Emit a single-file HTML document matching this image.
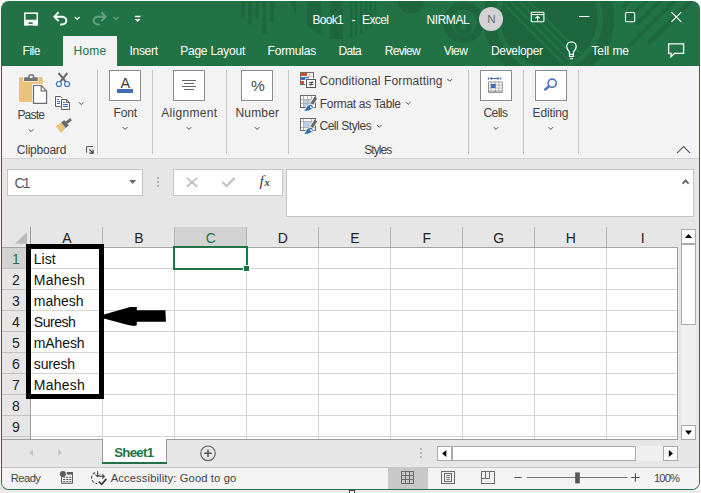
<!DOCTYPE html>
<html lang="en"><head><meta charset="utf-8"><title>Book1 - Excel</title>
<style>
html,body{margin:0;padding:0;}
body{width:701px;height:493px;position:relative;overflow:hidden;background:#fff;font-family:"Liberation Sans",sans-serif;}
.b{position:absolute;box-sizing:border-box;}
.t{position:absolute;white-space:pre;line-height:1;}
svg{position:absolute;overflow:visible;}
#win{position:absolute;left:1px;top:1px;width:699px;height:489px;border-radius:8px;overflow:hidden;background:#217346;}
#in{position:absolute;left:-1px;top:-1px;width:701px;height:493px;}
</style></head><body>
<div class="b" style="left:0;top:490px;width:701px;height:3px;background:#ebebeb"></div>
<div class="b" style="left:0;top:0;width:1px;height:480px;background:#f8f3f4"></div>
<div class="b" style="left:0;top:480px;width:11px;height:10px;background:linear-gradient(#f1eeee,#dedede)"></div>
<div class="b" style="left:349px;top:490px;width:6px;height:5px;background:#fff;border:1px solid #3a3a3a"></div>
<div id="win"><div id="in">
<svg class="b" style="left:0;top:0" width="701" height="66" viewBox="0 0 701 66">
<defs><clipPath id="cpd"><circle cx="549" cy="18" r="47.5"/></clipPath></defs>
<g fill="rgba(0,0,0,0.105)">
<rect x="241.1" y="0" width="3.7" height="17.6"/><rect x="248.2" y="0" width="3.7" height="24.5"/>
<rect x="255.4" y="0" width="3.7" height="18.5"/><rect x="262.5" y="0" width="3.7" height="33.4"/><rect x="269.9" y="0" width="3.7" height="21.3"/>
<polygon points="289,0 296,0 296,15"/>
<polygon points="307,0 321,0 321,34.5 307,26"/><rect x="330.2" y="0" width="12.6" height="39"/>
<rect x="350.2" y="0" width="2.1" height="38.5"/><rect x="355" y="0" width="2.1" height="35.7"/><rect x="360" y="0" width="2.2" height="33.5"/><rect x="365" y="0" width="2.1" height="30.7"/><rect x="370" y="0" width="2" height="27.8"/><rect x="374.6" y="0" width="1.6" height="24.3"/>
<path d="M397,0 A13.7,13.7 0 0 0 424.4,0 Z"/>
<circle cx="549" cy="18" r="48.6"/>
</g>
<g clip-path="url(#cpd)" stroke="#217346" stroke-width="2.6" fill="none">
<path d="M500,0 L580,80 M509,0 L589,80 M518,0 L598,80 M527,0 L607,80"/>
</g>
<g fill="none" stroke="rgba(0,0,0,0.105)">
<circle cx="463.5" cy="22.5" r="16.7" stroke-width="7.8"/>
<circle cx="463.5" cy="26.5" r="5.9" stroke-width="5.2"/>
<circle cx="549" cy="18" r="59.6" stroke-width="11.5"/>
<g stroke-width="3.9">
<path d="M631.6,-1 L622.6,8"/><path d="M648,-1 L626,21"/><path d="M662,-1 L636.5,24.5"/>
<path d="M676,-1 L628.5,46.5"/><path d="M693,-1 L648.5,43.5"/>
</g>
</g></svg>
<svg class="b" style="left:0;top:0" width="701" height="66" viewBox="0 0 701 66" fill="none" stroke="#fff" stroke-width="1.3">
<rect x="24.85" y="13.15" width="12.4" height="11.5" stroke-width="1.5"/>
<path d="M24.5,19.8 H37.6 V25.4 H32.7 V22.2 H28.5 V25.4 H24.5 Z" fill="#fff" stroke="none"/>
<!-- undo -->
<path d="M58.6,12.2 L54.4,16.7 L58.6,21.2" stroke-width="1.9"/>
<path d="M54.8,16.7 H62 A4.4,3.9 0 0 1 62,24.5 H60.2" stroke-width="1.9"/>
<path d="M74.8,17 L77.2,19.4 L79.6,17" stroke-width="1.2"/>
<!-- redo (dim) -->
<g opacity="0.33">
<path d="M101.4,12.2 L105.6,16.7 L101.4,21.2" stroke-width="1.9"/>
<path d="M105.2,16.7 H98 A4.4,3.9 0 0 0 98,24.5 H99.8" stroke-width="1.9"/>
<path d="M113.6,17 L116,19.4 L118.4,17" stroke-width="1.2"/>
</g>
<!-- customize -->
<path d="M134.9,16.5 H140.4" stroke-width="1.5"/>
<path d="M134.7,18.9 H140.6 L137.65,22 Z" fill="#fff" stroke="none"/>
<!-- ribbon display options -->
<rect x="531.3" y="12.3" width="12.6" height="9.4" rx="0.8" stroke-width="1.1"/>
<path d="M531.3,14.6 H543.9" stroke-width="1"/>
<path d="M537.6,21 V16.4 M535.4,18.4 L537.6,16.2 L539.8,18.4" stroke-width="1.1"/>
<!-- minimize -->
<path d="M579,16.5 H589.3" stroke-width="1.1"/>
<!-- maximize -->
<rect x="625.5" y="12.5" width="9.2" height="9.2" rx="1.2" stroke-width="1.1"/>
<!-- close -->
<path d="M671.4,12.1 L681.2,21.9 M681.2,12.1 L671.4,21.9" stroke-width="1.1"/>
<!-- light bulb -->
<path d="M569.5,54.4 V53 C569.5,50.8 566.7,49.8 566.7,46.6 A4.75,4.75 0 0 1 576.2,46.6 C576.2,49.8 573.4,50.8 573.4,53 V54.4" stroke-width="1.3"/>
<rect x="569.5" y="54.5" width="3.9" height="2" stroke-width="1.1"/>
<path d="M570,58.6 H573" stroke-width="1.1"/>
<!-- comment -->
<path d="M668.6,43.9 H683.6 V53.4 H674.6 L671,56.8 V53.4 H668.6 Z" stroke-width="1.3"/>
</svg>
<span class="t" style="left:312.40px;top:14.00px;font-size:12px;letter-spacing:-0.655px;color:#fff;">Book1</span>
<span class="t" style="left:351.60px;top:14.00px;font-size:12px;letter-spacing:0.000px;color:#fff;">-</span>
<span class="t" style="left:362.00px;top:14.00px;font-size:12px;letter-spacing:-0.585px;color:#fff;">Excel</span>
<span class="t" style="left:426.60px;top:14.00px;font-size:12px;letter-spacing:-0.467px;color:#fff;">NIRMAL</span>
<div class="b" style="left:479px;top:7px;width:24px;height:24px;border-radius:12px;background:#d3d3d3"></div>
<span class="t" style="left:487.30px;top:14.00px;font-size:11.5px;letter-spacing:0.000px;color:#6d6a7f;">N</span>
<div class="b" style="left:63px;top:36px;width:54px;height:31px;background:#f3f3f3;"></div>
<span class="t" style="left:22.60px;top:45.00px;font-size:12px;letter-spacing:-0.511px;color:#fff;">File</span>
<span class="t" style="left:73.60px;top:45.00px;font-size:12px;letter-spacing:0.195px;color:#217346;">Home</span>
<span class="t" style="left:129.50px;top:45.00px;font-size:12px;letter-spacing:-0.302px;color:#fff;">Insert</span>
<span class="t" style="left:180.20px;top:45.00px;font-size:12px;letter-spacing:-0.229px;color:#fff;">Page Layout</span>
<span class="t" style="left:267.50px;top:45.00px;font-size:12px;letter-spacing:-0.188px;color:#fff;">Formulas</span>
<span class="t" style="left:338.60px;top:45.00px;font-size:12px;letter-spacing:-0.719px;color:#fff;">Data</span>
<span class="t" style="left:384.80px;top:45.00px;font-size:12px;letter-spacing:-0.677px;color:#fff;">Review</span>
<span class="t" style="left:443.70px;top:45.00px;font-size:12px;letter-spacing:-0.508px;color:#fff;">View</span>
<span class="t" style="left:491.00px;top:45.00px;font-size:12px;letter-spacing:-0.337px;color:#fff;">Developer</span>
<span class="t" style="left:591.40px;top:45.00px;font-size:12px;letter-spacing:-0.069px;color:#fff;">Tell me</span>
<div class="b" style="left:2px;top:66px;width:697px;height:423px;border-radius:0 0 7px 7px;overflow:hidden;background:#e6e6e6"><div class="b" style="left:-2px;top:-66px;width:701px;height:493px">
<div class="b" style="left:2px;top:66px;width:697px;height:92px;background:#f3f3f3;"></div>
<div class="b" style="left:2px;top:158px;width:697px;height:1px;background:#d3d3d3;"></div>
<div class="b" style="left:97px;top:70px;width:1px;height:84px;background:#c4c4c4;"></div>
<div class="b" style="left:152px;top:70px;width:1px;height:84px;background:#c4c4c4;"></div>
<div class="b" style="left:226px;top:70px;width:1px;height:84px;background:#c4c4c4;"></div>
<div class="b" style="left:288px;top:70px;width:1px;height:84px;background:#c4c4c4;"></div>
<div class="b" style="left:468px;top:70px;width:1px;height:84px;background:#c4c4c4;"></div>
<div class="b" style="left:523px;top:70px;width:1px;height:84px;background:#c4c4c4;"></div>
<div class="b" style="left:578px;top:70px;width:1px;height:84px;background:#c4c4c4;"></div>
<svg class="b" style="left:0;top:0" width="701" height="170" viewBox="0 0 701 170">
<!-- paste: clipboard -->
<rect x="19" y="77" width="23.9" height="25" rx="1.7" fill="#eac27b"/>
<path d="M24,80.9 V78.4 Q24,77.2 25.2,77.2 H28.3 V75.7 Q28.3,74.2 29.8,74.2 H32.7 Q34.2,74.2 34.2,75.7 V77.2 H36.6 Q37.8,77.2 37.8,78.4 V80.9 Z" fill="#f3f3f3" stroke="#f3f3f3" stroke-width="1.8"/>
<path d="M24,80.9 V78.4 Q24,77.2 25.2,77.2 H28.3 V75.7 Q28.3,74.2 29.8,74.2 H32.7 Q34.2,74.2 34.2,75.7 V77.2 H36.6 Q37.8,77.2 37.8,78.4 V80.9 Z" fill="#737373"/>
<rect x="29.9" y="75.8" width="2.7" height="2.3" fill="#fff"/>
<path d="M33.5,85.5 H41.2 L46.6,90.9 V103.4 H33.5 Z" fill="#fff" stroke="#f6f6f6" stroke-width="3"/>
<path d="M33.5,85.5 H41.2 L46.6,90.9 V103.4 H33.5 Z" fill="#fff" stroke="#6a6a6a" stroke-width="1.2" stroke-linejoin="miter"/>
<path d="M41.2,85.7 V90.9 H46.4" fill="none" stroke="#6a6a6a" stroke-width="1.2"/>
<!-- scissors -->
<g fill="none">
<path d="M58.6,73 L65.6,81.6" stroke="#6a6a6a" stroke-width="2"/>
<path d="M67.4,73 L60.4,81.6" stroke="#6a6a6a" stroke-width="2"/>
<circle cx="58.9" cy="84" r="2.5" stroke="#4472b8" stroke-width="1.2"/>
<circle cx="67.1" cy="84" r="2.5" stroke="#4472b8" stroke-width="1.2"/>
</g>
<!-- copy -->
<path d="M55.5,96.5 H60.5 L62.5,98.5 V106.5 H55.5 Z" fill="#fff" stroke="#fff" stroke-width="1.9"/>
<path d="M55.5,96.5 H60.5 L62.5,98.5 V106.5 H55.5 Z" fill="#fff" stroke="#5a5a5a" stroke-width="1"/>
<path d="M57,99.5 H59 M57,101.5 H60.2 M57,103.5 H60.2" stroke="#3e6db5" stroke-width="1.1" fill="none"/>
<path d="M61.5,99.5 H66.5 L69.5,102.5 V109.5 H61.5 Z" fill="#fff" stroke="#fff" stroke-width="1.9"/>
<path d="M61.5,99.5 H66.5 L69.5,102.5 V109.5 H61.5 Z" fill="#fff" stroke="#5a5a5a" stroke-width="1"/>
<path d="M66.5,99.5 V102.5 H69.5" fill="none" stroke="#5a5a5a" stroke-width="1"/>
<path d="M63,102.5 H65.2 M63,104.5 H68 M63,106.5 H68" stroke="#3e6db5" stroke-width="1.1" fill="none"/>
<!-- format painter -->
<g transform="translate(58.4,129.4) rotate(-39.3)">
<polygon points="0,-4.5 6.6,-3.5 6.6,3.5 0,4.5" fill="#eac27b"/>
<rect x="6.5" y="-3.6" width="4" height="7.2" fill="#6b6b6b"/>
<rect x="10.4" y="-1.4" width="5.9" height="2.8" fill="#6b6b6b"/>
</g>
<!-- dialog launcher -->
<path d="M86.6,152.7 V146.6 H93" fill="none" stroke="#4f4f4f" stroke-width="1"/>
<path d="M89.4,149.4 L93,153" fill="none" stroke="#333" stroke-width="1.1"/>
<path d="M93.1,149.5 V153.1 H89.5" fill="none" stroke="#333" stroke-width="1.1"/>
</svg>
<span class="t" style="left:17.40px;top:109.00px;font-size:12px;letter-spacing:-0.771px;color:#424242;">Paste</span>
<svg class="b" style="left:0;top:0" width="701" height="493"><path d="M28.70,129.35 L31.00,131.65 L33.30,129.35" fill="none" stroke="#4a4a4a" stroke-width="1.0"/></svg>
<svg class="b" style="left:0;top:0" width="701" height="493"><path d="M78.90,102.25 L81.20,104.55 L83.50,102.25" fill="none" stroke="#4a4a4a" stroke-width="1.0"/></svg>
<span class="t" style="left:16.80px;top:144.00px;font-size:12px;letter-spacing:-0.232px;color:#424242;">Clipboard</span>
<div class="b" style="left:109px;top:70px;width:32px;height:31px;background:#fff;border:1px solid #8c8c8c"></div>
<span class="t" style="left:113.50px;top:107.00px;font-size:12px;letter-spacing:-0.171px;color:#424242;">Font</span>
<svg class="b" style="left:0;top:0" width="701" height="493"><path d="M122.80,127.15 L125.10,129.45 L127.40,127.15" fill="none" stroke="#4a4a4a" stroke-width="1.0"/></svg>
<div class="b" style="left:173px;top:70px;width:32px;height:31px;background:#fff;border:1px solid #8c8c8c"></div>
<span class="t" style="left:161.20px;top:107.00px;font-size:12px;letter-spacing:0.305px;color:#424242;">Alignment</span>
<svg class="b" style="left:0;top:0" width="701" height="493"><path d="M186.70,127.15 L189.00,129.45 L191.30,127.15" fill="none" stroke="#4a4a4a" stroke-width="1.0"/></svg>
<div class="b" style="left:241px;top:70px;width:32px;height:31px;background:#fff;border:1px solid #8c8c8c"></div>
<span class="t" style="left:235.50px;top:107.00px;font-size:12px;letter-spacing:0.163px;color:#424242;">Number</span>
<svg class="b" style="left:0;top:0" width="701" height="493"><path d="M254.80,127.15 L257.10,129.45 L259.40,127.15" fill="none" stroke="#4a4a4a" stroke-width="1.0"/></svg>
<div class="b" style="left:480px;top:70px;width:32px;height:31px;background:#fff;border:1px solid #8c8c8c"></div>
<span class="t" style="left:483.40px;top:107.00px;font-size:12px;letter-spacing:-0.519px;color:#424242;">Cells</span>
<svg class="b" style="left:0;top:0" width="701" height="493"><path d="M493.70,127.15 L496.00,129.45 L498.30,127.15" fill="none" stroke="#4a4a4a" stroke-width="1.0"/></svg>
<div class="b" style="left:535px;top:70px;width:32px;height:31px;background:#fff;border:1px solid #8c8c8c"></div>
<span class="t" style="left:532.60px;top:107.00px;font-size:12px;letter-spacing:-0.149px;color:#424242;">Editing</span>
<svg class="b" style="left:0;top:0" width="701" height="493"><path d="M548.50,127.15 L550.80,129.45 L553.10,127.15" fill="none" stroke="#4a4a4a" stroke-width="1.0"/></svg>
<span class="t" style="left:120.40px;top:76.00px;font-size:14.4px;letter-spacing:0.000px;color:#3a3a3a;">A</span>
<div class="b" style="left:117px;top:89.4px;width:16px;height:3.4px;background:#3e6db5;"></div>
<svg class="b" style="left:0;top:0" width="701" height="170" viewBox="0 0 701 170">
<path d="M182,80.5 H196 M184,83.5 H194 M182,86.5 H196 M184,89.5 H194" stroke="#666" stroke-width="1" fill="none"/>
<!-- cells icon -->
<path d="M488.4,77.2 V79.8 M500.8,77.2 V79.8 M490.6,78.5 H498.6" stroke="#3e6db5" stroke-width="1" fill="none"/>
<path d="M489.6,78.5 L491.8,76.7 V80.3 Z M499.6,78.5 L497.4,76.7 V80.3 Z" fill="#3e6db5"/>
<rect x="488.5" y="82" width="13.8" height="9" fill="#fff" stroke="#8a8a8a" stroke-width="0.9"/>
<path d="M488.5,85 H502.3 M488.5,88 H502.3 M491.1,82 V91 M495.4,82 V91 M498.9,82 V91" stroke="#a5a5a5" stroke-width="0.8" fill="none"/>
<rect x="490.9" y="83.9" width="4.6" height="4.1" fill="#3e6db5"/>
<path d="M488.6,91 V92.4 H495 V91 M495.6,91 V92.4 H502.2 V91" stroke="#7a7a7a" stroke-width="0.9" fill="none"/>
<!-- magnifier -->
<circle cx="552.2" cy="83.2" r="4.1" fill="none" stroke="#4a78ba" stroke-width="1.6"/>
<path d="M549,86.4 L545.2,89.5" stroke="#4a78ba" stroke-width="2.4" stroke-linecap="round"/>
<!-- collapse -->
<path d="M677,153.2 L683.6,146.6 L690.2,153.2" stroke="#555" stroke-width="1.1" fill="none"/>
</svg>
<span class="t" style="left:251.00px;top:78.00px;font-size:15.5px;letter-spacing:0.000px;color:#4a4a4a;">%</span>
<svg class="b" style="left:0;top:0" width="701" height="170" viewBox="0 0 701 170">
<!-- conditional formatting -->
<rect x="300.5" y="72.5" width="13" height="12" fill="#fff" stroke="#6a6a6a" stroke-width="1"/>
<path d="M309.5,73 V77 M307,76.5 H313" stroke="#c8c8c8" stroke-width="1" fill="none"/>
<rect x="301" y="73" width="6" height="3" fill="#dc4b25"/>
<rect x="301" y="77" width="8" height="3" fill="#3f73b7"/>
<rect x="301" y="81" width="3" height="3" fill="#dc4b25"/>
<rect x="306.5" y="79.5" width="9" height="8" fill="#fff" stroke="#f3f3f3" stroke-width="2.6"/>
<rect x="306.5" y="79.5" width="9" height="8" fill="#fff" stroke="#555" stroke-width="1"/>
<path d="M309,82.5 H313.5 M309,84.5 H313.5 M312.3,81.3 L310.3,85.7" stroke="#3a3a3a" stroke-width="0.9" fill="none"/>
<!-- format as table -->
<rect x="300.5" y="95.5" width="15" height="12" fill="#fff" stroke="#6a6a6a" stroke-width="1"/>
<rect x="304" y="100" width="7.5" height="7" fill="#bdd0e9"/>
<path d="M303.5,96 V107 M307.5,96 V107 M311.5,96 V107 M301,99.5 H315 M301,103.5 H315" stroke="#b4b4b4" stroke-width="1" fill="none"/>
<path d="M315.6,98 L312,103.6" stroke="#fff" stroke-width="4.8" fill="none"/><path d="M309.6,105 C311.6,104.4 313.2,106 312.8,107.6 C312.4,109.2 310.6,110 308.6,110.4 C307,110.8 305.2,111 304,110.8 C305.6,109.6 305.8,108.6 306.6,107.2 C307.4,105.8 308.4,105.3 309.6,105 Z" fill="#3a6fb0" stroke="#fff" stroke-width="1.4" paint-order="stroke"/><path d="M315.8,97.7 L311.9,103.8" stroke="#686868" stroke-width="3.2" fill="none"/><ellipse cx="310.9" cy="107.3" rx="0.8" ry="1.3" transform="rotate(-35 310.9 107.3)" fill="#fff"/>
<!-- cell styles -->
<rect x="300.5" y="118.5" width="15" height="12" fill="#fff" stroke="#6a6a6a" stroke-width="1"/>
<rect x="304" y="122" width="7.5" height="5.5" fill="#bdd0e9"/>
<path d="M303.5,119 V130 M311.5,119 V130 M301,121.5 H315 M301,127.5 H315" stroke="#b4b4b4" stroke-width="1" fill="none"/>
<path d="M315.6,121 L312,126.6" stroke="#fff" stroke-width="4.8" fill="none"/><path d="M309.6,128 C311.6,127.4 313.2,129 312.8,130.6 C312.4,132.2 310.6,133 308.6,133.4 C307,133.8 305.2,134 304,133.8 C305.6,132.6 305.8,131.6 306.6,130.2 C307.4,128.8 308.4,128.3 309.6,128 Z" fill="#3a6fb0" stroke="#fff" stroke-width="1.4" paint-order="stroke"/><path d="M315.8,120.7 L311.9,126.8" stroke="#686868" stroke-width="3.2" fill="none"/><ellipse cx="310.9" cy="130.3" rx="0.8" ry="1.3" transform="rotate(-35 310.9 130.3)" fill="#fff"/>
</svg>
<span class="t" style="left:319.40px;top:75.00px;font-size:12px;letter-spacing:0.108px;color:#424242;">Conditional Formatting</span>
<svg class="b" style="left:0;top:0" width="701" height="493"><path d="M447.50,79.05 L449.80,81.35 L452.10,79.05" fill="none" stroke="#4a4a4a" stroke-width="1.0"/></svg>
<span class="t" style="left:319.80px;top:98.00px;font-size:12px;letter-spacing:-0.329px;color:#424242;">Format as Table</span>
<svg class="b" style="left:0;top:0" width="701" height="493"><path d="M405.90,102.05 L408.20,104.35 L410.50,102.05" fill="none" stroke="#4a4a4a" stroke-width="1.0"/></svg>
<span class="t" style="left:319.40px;top:120.00px;font-size:12px;letter-spacing:-0.429px;color:#424242;">Cell Styles</span>
<svg class="b" style="left:0;top:0" width="701" height="493"><path d="M376.90,124.95 L379.20,127.25 L381.50,124.95" fill="none" stroke="#4a4a4a" stroke-width="1.0"/></svg>
<span class="t" style="left:364.20px;top:144.00px;font-size:12px;letter-spacing:-0.915px;color:#424242;">Styles</span>
<div class="b" style="left:7px;top:169px;width:136px;height:27px;background:#fff;border:1px solid #c6c6c6"></div>
<span class="t" style="left:14.60px;top:176.00px;font-size:14.4px;letter-spacing:-2.503px;color:#5a5a5a;">C1</span>
<div class="b" style="left:173px;top:169px;width:110px;height:27px;background:#fff;border:1px solid #c6c6c6"></div>
<div class="b" style="left:286px;top:169px;width:408px;height:48px;background:#fff;border:1px solid #c6c6c6"></div>
<svg class="b" style="left:0;top:0" width="701" height="240" viewBox="0 0 701 240">
<path d="M129,180 H136.2 L132.6,184 Z" fill="#6a6a6a"/>
<g fill="#b4b4b4"><rect x="157" y="177" width="2" height="2"/><rect x="157" y="181" width="2" height="2"/><rect x="157" y="185" width="2" height="2"/></g>
<path d="M186.8,177.9 L197.2,186.7 M197.2,177.9 L186.8,186.7" stroke="#c0c0c0" stroke-width="1.8" fill="none"/>
<path d="M222.4,182 L226.5,186.1 L234.6,177.8" stroke="#c4c4c4" stroke-width="2.4" fill="none"/>
<path d="M682.6,183.6 L685.6,180.5 L688.6,183.6" stroke="#666" stroke-width="2" fill="none"/>
</svg>
<span class="t" style="left:259.40px;top:173.00px;font-size:15.5px;letter-spacing:0.000px;color:#3f3f3f;font-family:'Liberation Serif',serif;font-style:italic;">f</span>
<span class="t" style="left:264.54px;top:178.00px;font-size:10.5px;letter-spacing:0.000px;color:#3f3f3f;font-family:'Liberation Serif',serif;font-style:italic;font-weight:700;">x</span>
<div class="b" style="left:2px;top:248px;width:675px;height:191px;background:#fff;"></div>
<div class="b" style="left:174px;top:227px;width:73px;height:20px;background:#d2d2d2;"></div>
<div class="b" style="left:2px;top:248px;width:28px;height:191px;background:#e6e6e6;"></div>
<div class="b" style="left:2px;top:248px;width:28px;height:20px;background:#d2d2d2;"></div>
<svg class="b" style="left:0;top:0" width="100" height="260" viewBox="0 0 100 260"><path d="M27,232.2 V243.8 H14.8 Z" fill="#b9b9b9"/></svg>
<div class="b" style="left:30px;top:227px;width:1px;height:20px;background:#9e9e9e;"></div>
<div class="b" style="left:102px;top:227px;width:1px;height:20px;background:#b4b4b4;"></div>
<div class="b" style="left:174px;top:227px;width:1px;height:20px;background:#b4b4b4;"></div>
<div class="b" style="left:246px;top:227px;width:1px;height:20px;background:#b4b4b4;"></div>
<div class="b" style="left:318px;top:227px;width:1px;height:20px;background:#b4b4b4;"></div>
<div class="b" style="left:390px;top:227px;width:1px;height:20px;background:#b4b4b4;"></div>
<div class="b" style="left:462px;top:227px;width:1px;height:20px;background:#b4b4b4;"></div>
<div class="b" style="left:534px;top:227px;width:1px;height:20px;background:#b4b4b4;"></div>
<div class="b" style="left:606px;top:227px;width:1px;height:20px;background:#b4b4b4;"></div>
<span class="t" style="left:62.13px;top:231.00px;font-size:14px;letter-spacing:0.000px;color:#222;">A</span>
<span class="t" style="left:134.13px;top:231.00px;font-size:14px;letter-spacing:0.000px;color:#222;">B</span>
<span class="t" style="left:205.75px;top:231.00px;font-size:14px;letter-spacing:0.000px;color:#217346;">C</span>
<span class="t" style="left:277.75px;top:231.00px;font-size:14px;letter-spacing:0.000px;color:#222;">D</span>
<span class="t" style="left:350.13px;top:231.00px;font-size:14px;letter-spacing:0.000px;color:#222;">E</span>
<span class="t" style="left:422.52px;top:231.00px;font-size:14px;letter-spacing:0.000px;color:#222;">F</span>
<span class="t" style="left:493.35px;top:231.00px;font-size:14px;letter-spacing:0.000px;color:#222;">G</span>
<span class="t" style="left:565.75px;top:231.00px;font-size:14px;letter-spacing:0.000px;color:#222;">H</span>
<span class="t" style="left:640.85px;top:231.00px;font-size:14px;letter-spacing:0.000px;color:#222;">I</span>
<div class="b" style="left:2px;top:247px;width:676px;height:1px;background:#a2a2a2;"></div>
<span class="t" style="left:12.11px;top:252.00px;font-size:14px;letter-spacing:0.000px;color:#217346;">1</span>
<div class="b" style="left:2px;top:268px;width:28px;height:1px;background:#c2c2c2;"></div>
<span class="t" style="left:12.11px;top:273.00px;font-size:14px;letter-spacing:0.000px;color:#222;">2</span>
<div class="b" style="left:2px;top:289px;width:28px;height:1px;background:#c2c2c2;"></div>
<span class="t" style="left:12.11px;top:294.00px;font-size:14px;letter-spacing:0.000px;color:#222;">3</span>
<div class="b" style="left:2px;top:310px;width:28px;height:1px;background:#c2c2c2;"></div>
<span class="t" style="left:12.11px;top:315.00px;font-size:14px;letter-spacing:0.000px;color:#222;">4</span>
<div class="b" style="left:2px;top:331px;width:28px;height:1px;background:#c2c2c2;"></div>
<span class="t" style="left:12.11px;top:336.00px;font-size:14px;letter-spacing:0.000px;color:#222;">5</span>
<div class="b" style="left:2px;top:352px;width:28px;height:1px;background:#c2c2c2;"></div>
<span class="t" style="left:12.11px;top:357.00px;font-size:14px;letter-spacing:0.000px;color:#222;">6</span>
<div class="b" style="left:2px;top:373px;width:28px;height:1px;background:#c2c2c2;"></div>
<span class="t" style="left:12.11px;top:378.00px;font-size:14px;letter-spacing:0.000px;color:#222;">7</span>
<div class="b" style="left:2px;top:394px;width:28px;height:1px;background:#c2c2c2;"></div>
<span class="t" style="left:12.11px;top:399.00px;font-size:14px;letter-spacing:0.000px;color:#222;">8</span>
<div class="b" style="left:2px;top:415px;width:28px;height:1px;background:#c2c2c2;"></div>
<span class="t" style="left:12.11px;top:420.00px;font-size:14px;letter-spacing:0.000px;color:#222;">9</span>
<div class="b" style="left:2px;top:436px;width:28px;height:1px;background:#c2c2c2;"></div>
<div class="b" style="left:30px;top:248px;width:1px;height:191px;background:#9e9e9e;"></div>
<div class="b" style="left:31px;top:268px;width:646px;height:1px;background:#d4d4d4;"></div>
<div class="b" style="left:31px;top:289px;width:646px;height:1px;background:#d4d4d4;"></div>
<div class="b" style="left:31px;top:310px;width:646px;height:1px;background:#d4d4d4;"></div>
<div class="b" style="left:31px;top:331px;width:646px;height:1px;background:#d4d4d4;"></div>
<div class="b" style="left:31px;top:352px;width:646px;height:1px;background:#d4d4d4;"></div>
<div class="b" style="left:31px;top:373px;width:646px;height:1px;background:#d4d4d4;"></div>
<div class="b" style="left:31px;top:394px;width:646px;height:1px;background:#d4d4d4;"></div>
<div class="b" style="left:31px;top:415px;width:646px;height:1px;background:#d4d4d4;"></div>
<div class="b" style="left:31px;top:436px;width:646px;height:1px;background:#d4d4d4;"></div>
<div class="b" style="left:102px;top:248px;width:1px;height:191px;background:#d4d4d4;"></div>
<div class="b" style="left:174px;top:248px;width:1px;height:191px;background:#d4d4d4;"></div>
<div class="b" style="left:246px;top:248px;width:1px;height:191px;background:#d4d4d4;"></div>
<div class="b" style="left:318px;top:248px;width:1px;height:191px;background:#d4d4d4;"></div>
<div class="b" style="left:390px;top:248px;width:1px;height:191px;background:#d4d4d4;"></div>
<div class="b" style="left:462px;top:248px;width:1px;height:191px;background:#d4d4d4;"></div>
<div class="b" style="left:534px;top:248px;width:1px;height:191px;background:#d4d4d4;"></div>
<div class="b" style="left:606px;top:248px;width:1px;height:191px;background:#d4d4d4;"></div>
<div class="b" style="left:677px;top:247px;width:1px;height:193px;background:#9e9e9e;"></div>
<div class="b" style="left:2px;top:439px;width:676px;height:1px;background:#9e9e9e;"></div>
<span class="t" style="left:33.80px;top:252.00px;font-size:14px;letter-spacing:0.005px;color:#111;">List</span>
<span class="t" style="left:33.80px;top:273.00px;font-size:14px;letter-spacing:0.218px;color:#111;">Mahesh</span>
<span class="t" style="left:33.80px;top:294.00px;font-size:14px;letter-spacing:-0.022px;color:#111;">mahesh</span>
<span class="t" style="left:33.80px;top:315.00px;font-size:14px;letter-spacing:-0.470px;color:#111;">Suresh</span>
<span class="t" style="left:33.80px;top:336.00px;font-size:14px;letter-spacing:-0.110px;color:#111;">mAhesh</span>
<span class="t" style="left:33.80px;top:357.00px;font-size:14px;letter-spacing:-0.163px;color:#111;">suresh</span>
<span class="t" style="left:33.80px;top:378.00px;font-size:14px;letter-spacing:0.218px;color:#111;">Mahesh</span>
<div class="b" style="left:173px;top:246px;width:75px;height:24px;border:2px solid #217346"></div>
<div class="b" style="left:243px;top:265px;width:7px;height:7px;background:#fff;"></div>
<div class="b" style="left:244px;top:266px;width:5px;height:5px;background:#217346;"></div>
<div class="b" style="left:26px;top:244px;width:78px;height:154.5px;border:5px solid #000"></div>
<svg class="b" style="left:0;top:0" width="200" height="340" viewBox="0 0 200 340">
<polygon points="104,314.4 130.2,307.1 136.8,307.1 136.8,310.2 165.4,310.2 165.9,321.7 136.8,321.7 136.8,325.3 133.8,325.9 127.1,324.7 104,318.6" fill="#000"/></svg>
<div class="b" style="left:681px;top:229px;width:15px;height:211px;background:#f0f0f0;"></div>
<div class="b" style="left:681px;top:229px;width:15px;height:15px;background:#fff;border:1px solid #ababab"></div>
<div class="b" style="left:681px;top:244px;width:15px;height:81px;background:#fff;border:1px solid #ababab"></div>
<div class="b" style="left:681px;top:425px;width:15px;height:15px;background:#fff;border:1px solid #ababab"></div>
<div class="b" style="left:437px;top:446px;width:241px;height:15px;background:#f0f0f0;"></div>
<div class="b" style="left:437px;top:446px;width:15px;height:15px;background:#fff;border:1px solid #ababab"></div>
<div class="b" style="left:452px;top:446px;width:184px;height:15px;background:#fff;border:1px solid #ababab"></div>
<div class="b" style="left:663px;top:446px;width:15px;height:15px;background:#fff;border:1px solid #ababab"></div>
<svg class="b" style="left:0;top:0" width="701" height="493" viewBox="0 0 701 493">
<path d="M684.8,238 H692.2 L688.5,234.1 Z" fill="#000"/>
<path d="M685,430.4 H692 L688.5,434.8 Z" fill="#000"/>
<path d="M446.3,450 V457 L442.1,453.5 Z" fill="#000"/>
<path d="M668.8,450 V457 L673,453.5 Z" fill="#000"/>
<g fill="#b4b4b4"><rect x="420" y="448" width="2" height="2"/><rect x="420" y="452" width="2" height="2"/><rect x="420" y="456" width="2" height="2"/></g>
<path d="M33,449.4 V456.2 L29.2,452.8 Z M58.2,449.4 V456.2 L62,452.8 Z" fill="#c3c3c3"/>
<circle cx="208" cy="453.3" r="7.3" fill="none" stroke="#606060" stroke-width="1.2"/>
<path d="M204.2,453.3 H211.8 M208,449.5 V457.1" stroke="#555" stroke-width="1.5" fill="none"/>
</svg>
<div class="b" style="left:102px;top:439px;width:65px;height:25px;background:#fff;"></div>
<div class="b" style="left:102px;top:462px;width:65px;height:2px;background:#217346;"></div>
<div class="b" style="left:102px;top:439px;width:1px;height:23px;background:#9a9a9a;"></div>
<div class="b" style="left:166px;top:439px;width:1px;height:23px;background:#9a9a9a;"></div>
<span class="t" style="left:114.20px;top:446.00px;font-size:13.2px;letter-spacing:-0.677px;color:#217346;font-weight:700;">Sheet1</span>
<div class="b" style="left:2px;top:467px;width:697px;height:1px;background:#c8c8c8;"></div>
<div class="b" style="left:2px;top:468px;width:697px;height:22px;background:#f3f3f3;"></div>
<div class="b" style="left:388px;top:468px;width:40px;height:22px;background:#c8c8c8;"></div>
<span class="t" style="left:10.80px;top:473.00px;font-size:11.2px;letter-spacing:-0.545px;color:#444;">Ready</span>
<span class="t" style="left:110.70px;top:473.00px;font-size:11.2px;letter-spacing:0.128px;color:#444;">Accessibility: Good to go</span>
<span class="t" style="left:653.90px;top:473.00px;font-size:11.2px;letter-spacing:-0.850px;color:#444;">100%</span>
<svg class="b" style="left:0;top:0" width="701" height="493" viewBox="0 0 701 493">
<!-- macro icon -->
<path d="M61.5,475.5 V483.3 H72.5 V472.6" fill="none" stroke="#5c5c5c" stroke-width="1"/>
<rect x="66.8" y="472" width="6.2" height="2.6" fill="#5c5c5c"/>
<g fill="#5c5c5c"><rect x="63.2" y="476.8" width="2.2" height="1"/><rect x="66.2" y="476.8" width="2.2" height="1"/><rect x="69.2" y="476.8" width="2.2" height="1"/>
<rect x="63.2" y="479" width="2.2" height="1"/><rect x="66.2" y="479" width="2.2" height="1"/><rect x="69.2" y="479" width="2.2" height="1"/>
<rect x="63.2" y="481.2" width="2.2" height="1"/><rect x="66.2" y="481.2" width="2.2" height="1"/><rect x="69.2" y="481.2" width="2.2" height="1"/></g>
<circle cx="62.9" cy="474.1" r="3" fill="#5c5c5c"/>
<!-- accessibility icon -->
<path d="M95.2,472.6 A5.7,5.7 0 0 0 97.2,483.6" fill="none" stroke="#4a4a4a" stroke-width="1.1" stroke-dasharray="3 1.5"/>
<path d="M97.6,471.2 V476.6 M95.4,474.6 L97.6,476.8 L99.8,474.6" fill="none" stroke="#4a4a4a" stroke-width="1.1"/>
<path d="M99.4,476.4 H104.2 M102.2,474.2 L104.4,476.4 L102.2,478.6" fill="none" stroke="#4a4a4a" stroke-width="1.1"/>
<path d="M98.8,481.6 L101.7,484.3 L106.3,478.9" fill="none" stroke="#3a3a3a" stroke-width="1.7"/>
<!-- view icons -->
<g fill="none" stroke="#6a6a6a" stroke-width="1">
<rect x="401.5" y="471.5" width="12" height="12"/>
<path d="M401.5,475.5 H413.5 M401.5,479.5 H413.5 M405.5,471.5 V483.5 M409.5,471.5 V483.5"/>
<rect x="441.5" y="471.5" width="13" height="12"/>
<rect x="444.5" y="473.5" width="7" height="8"/>
<path d="M446.2,475.6 H450 M446.2,477.6 H450 M446.2,479.6 H450" stroke-width="0.9"/>
<rect x="481.5" y="471.5" width="13" height="12"/>
<path d="M485.5,471.5 V478.5 M489.5,471.5 V478.5 M481.5,478.5 H489.5" />
</g>
<!-- zoom slider -->
<path d="M514.4,477.5 H521.6" stroke="#555" stroke-width="1.1"/>
<path d="M527,477.5 H627.4" stroke="#777" stroke-width="1"/>
<rect x="575.2" y="472.4" width="4.6" height="11" fill="#555"/>
<path d="M631.2,477.5 H639.6 M635.4,473.3 V481.7" stroke="#555" stroke-width="1.1"/>
</svg>
</div></div>
</div></div>
</body></html>
